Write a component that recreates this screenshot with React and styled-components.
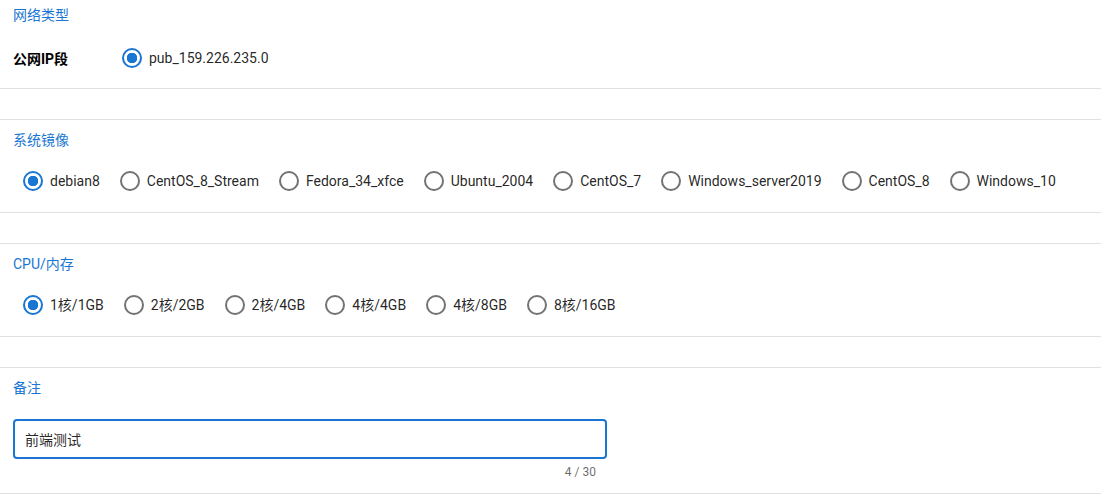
import React, { useState, useRef, useEffect } from "react";
import styled, { createGlobalStyle } from "styled-components";

const GlobalStyle = createGlobalStyle`
  html, body {
    margin: 0;
    padding: 0;
    background: #fff;
  }
  body {
    font-family: Roboto, "Noto Sans CJK SC", "Noto Sans", sans-serif;
    color: rgba(0, 0, 0, 0.87);
    font-size: 14px;
  }
`;

const Page = styled.div`
  width: 100%;
`;

const Section = styled.section`
  padding: ${({ first, pb }) => (first ? "6px 13px 18px" : `11px 13px ${pb || 19}px`)};
  border-bottom: 1px solid #e0e0e0;
  border-top: ${({ first }) => (first ? "none" : "1px solid #e0e0e0")};
  margin-top: ${({ first }) => (first ? "0" : "30px")};
`;

const Title = styled.div`
  color: #1976d2;
  font-size: 14px;
  line-height: 18px;
  height: 18px;
`;

const FieldRow = styled.div`
  display: flex;
  align-items: center;
  margin-top: 22px;
  height: 24px;
`;

const FieldLabel = styled.div`
  width: 107px;
  font-weight: 700;
  font-size: 14px;
  color: #000;
`;

const RadioGroup = styled.div`
  display: flex;
  align-items: center;
  flex-wrap: wrap;
  margin-top: ${({ mt }) => mt || 0}px;
  padding-left: ${({ indent }) => indent || 0}px;
`;

const RadioItem = styled.label`
  display: inline-flex;
  align-items: center;
  height: 24px;
  margin-right: 18px;
  cursor: pointer;
`;

const RadioIcon = styled.span`
  width: 24px;
  height: 24px;
  display: inline-flex;
  align-items: center;
  justify-content: center;
  flex-shrink: 0;

  &::before {
    content: "";
    box-sizing: border-box;
    width: 20px;
    height: 20px;
    border-radius: 50%;
    border: 2px solid ${({ checked }) => (checked ? "#1976d2" : "#737373")};
    background: ${({ checked }) =>
      checked ? "radial-gradient(circle, #1976d2 0 5px, transparent 5.5px)" : "transparent"};
  }
`;

const RadioText = styled.span`
  margin-left: 5px;
  font-size: 14px;
  line-height: 20px;
  color: rgba(0, 0, 0, 0.87);
`;

const NoteWrap = styled.div`
  width: 594px;
  margin-top: 22px;
`;

const NoteInput = styled.input`
  box-sizing: border-box;
  width: 100%;
  height: 40px;
  border: 2px solid #1976d2;
  border-radius: 4px;
  padding: 0 10px;
  font-family: Roboto, "Noto Sans CJK SC", sans-serif;
  font-size: 14px;
  color: rgba(0, 0, 0, 0.87);
  outline: none;
  caret-color: #000;
`;

const Counter = styled.div`
  text-align: right;
  padding-right: 11px;
  margin-top: 6px;
  font-size: 12px;
  line-height: 14px;
  color: rgba(0, 0, 0, 0.6);
`;

function Radio({ label, checked, onSelect }) {
  return (
    <RadioItem onClick={onSelect}>
      <RadioIcon checked={checked} />
      <RadioText>{label}</RadioText>
    </RadioItem>
  );
}

const images = [
  "debian8",
  "CentOS_8_Stream",
  "Fedora_34_xfce",
  "Ubuntu_2004",
  "CentOS_7",
  "Windows_server2019",
  "CentOS_8",
  "Windows_10",
];

const specs = ["1核/1GB", "2核/2GB", "2核/4GB", "4核/4GB", "4核/8GB", "8核/16GB"];

export default function App() {
  const [image, setImage] = useState("debian8");
  const [spec, setSpec] = useState("1核/1GB");
  const [note, setNote] = useState("前端测试");
  const inputRef = useRef(null);

  useEffect(() => {
    if (inputRef.current) {
      inputRef.current.focus();
      const len = inputRef.current.value.length;
      inputRef.current.setSelectionRange(len, len);
    }
  }, []);

  return (
    <Page>
      <GlobalStyle />
      <Section first>
        <Title>网络类型</Title>
        <FieldRow>
          <FieldLabel>公网IP段</FieldLabel>
          <Radio label="pub_159.226.235.0" checked />
        </FieldRow>
      </Section>

      <Section>
        <Title>系统镜像</Title>
        <RadioGroup mt={20} indent={8}>
          {images.map((item) => (
            <Radio
              key={item}
              label={item}
              checked={image === item}
              onSelect={() => setImage(item)}
            />
          ))}
        </RadioGroup>
      </Section>

      <Section>
        <Title>CPU/内存</Title>
        <RadioGroup mt={20} indent={8}>
          {specs.map((item) => (
            <Radio
              key={item}
              label={item}
              checked={spec === item}
              onSelect={() => setSpec(item)}
            />
          ))}
        </RadioGroup>
      </Section>

      <Section pb={14}>
        <Title>备注</Title>
        <NoteWrap>
          <NoteInput
            ref={inputRef}
            value={note}
            maxLength={30}
            onChange={(e) => setNote(e.target.value)}
          />
          <Counter>{note.length} / 30</Counter>
        </NoteWrap>
      </Section>
    </Page>
  );
}
